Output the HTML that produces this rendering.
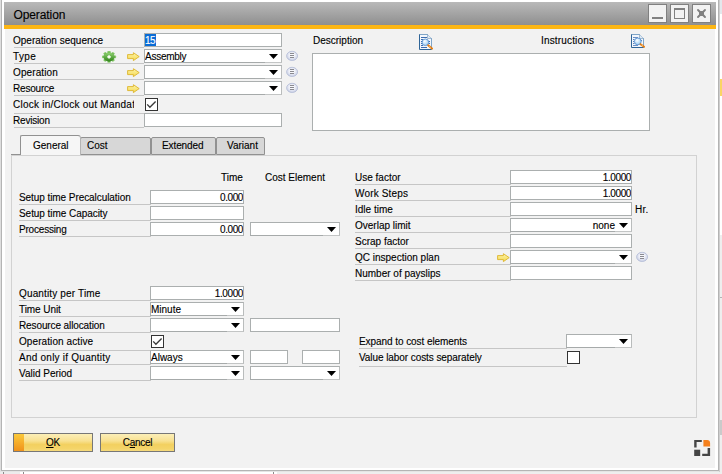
<!DOCTYPE html>
<html lang="en"><head><meta charset="utf-8"><title>Operation</title>
<style>
html,body{margin:0;padding:0;background:#fff;}
body{width:722px;height:474px;overflow:hidden;position:relative;font-family:"Liberation Sans",sans-serif;font-size:10px;color:#000;-webkit-text-stroke:0.12px;}
#w{position:absolute;left:0;top:0;width:722px;height:474px;overflow:hidden;background:#fff;}
#w div,#w svg,#w i,#w span{box-sizing:border-box;}
.o0{position:absolute;left:0;top:0;width:1px;height:471px;background:#dedede;}
.o1{position:absolute;left:1px;top:0;width:1px;height:471px;background:#b4b4b4;}
.o2{position:absolute;left:718px;top:0;width:1px;height:471px;background:#b4b4b4;}
.o3{position:absolute;left:1px;top:470px;width:718px;height:1px;background:#b4b4b4;}
.o4{position:absolute;left:0;top:471px;width:720px;height:1px;background:#e4e4e4;}
.o5{position:absolute;left:719px;top:0;width:1px;height:472px;background:#cfcfcf;}
.o6{position:absolute;left:720px;top:0;width:2px;height:14px;background:#e3e8ec;}
.frame{position:absolute;left:5px;top:2px;width:710px;height:466px;background:#f2f2f2;}
.title{position:absolute;left:4px;top:2px;width:712px;height:23px;background:linear-gradient(#b9b9b9,#8f8f8f);}
.tt{position:absolute;left:9.4px;top:5px;font-size:12px;line-height:16px;letter-spacing:-0.08px;white-space:nowrap;}
.stripe{position:absolute;left:4px;top:25px;width:712px;height:4px;background:#fcb614;}
.t{position:absolute;height:14px;line-height:14px;white-space:nowrap;}
.ul{position:absolute;height:1px;background:#c6c6c6;}
.in{position:absolute;background:#fff;border:1px solid #abafaf;line-height:12px;white-space:nowrap;overflow:hidden;}
.in .v{position:absolute;left:0;top:1px;height:12px;}
.in.r .v{left:auto;right:0;}
.in.r.hd .v{right:16px;}
.sel{background:#0a6cd6;color:#fff;display:inline-block;height:12px;margin:-1px 0 0 0;padding:1px 0 0 0;width:11px;letter-spacing:-0.6px;white-space:nowrap;}
.dd{position:absolute;right:3px;top:4px;width:9px;height:5px;background:#000;clip-path:polygon(0 0,100% 0,50% 100%);}
.in.hd{border-right-color:#b9bcbc;border-bottom-color:#c3c5c5;}
.db{position:absolute;height:1px;background:#a6aaaa;}
.a{position:absolute;}
.bg{position:absolute;}
.cb{position:absolute;width:13px;height:13px;border:1px solid #333;background:#fff;}
.cb svg{position:absolute;left:0;top:0;}
.panel{position:absolute;left:11px;top:155px;width:686px;height:263px;border:1px solid #d2d2d2;}
.tab{position:absolute;top:137px;height:18px;background:#d7d7d7;border:1px solid #919191;border-radius:2px 2px 0 0;line-height:16px;}
.tab span{position:absolute;top:0;white-space:nowrap;}
.tab.act{top:135px;height:20px;background:#f6f6f6;border-color:#919191 #b4b4b4 #919191 #919191;border-bottom:none;border-radius:2px 3px 0 0;line-height:20px;}
.pl{position:absolute;left:11px;top:154px;width:10px;height:1px;background:#919191;}
.btn{position:absolute;top:433px;height:19px;border:1px solid #777;background:linear-gradient(#fcefb8 0%,#f8e192 40%,#f3d060 62%,#f4d468 85%,#f6da7c 100%);text-align:center;line-height:17px;letter-spacing:-0.3px;}
.btn .def{position:absolute;left:0;top:0;width:10px;height:17px;background:linear-gradient(#fbc93a,#f0921c);}
.btn span{position:relative;}
</style></head>
<body><div id="w">
<svg class="a" width="0" height="0" style="left:0;top:0" aria-hidden="true"><defs>
<linearGradient id="ag" x1="0" y1="0" x2="0" y2="1"><stop offset="0" stop-color="#fdf5ae"/><stop offset="1" stop-color="#f5d84c"/></linearGradient>
<radialGradient id="cg" cx="0.5" cy="0.42" r="0.6"><stop offset="0.3" stop-color="#f7f8fc"/><stop offset="1" stop-color="#c3cae2"/></radialGradient>
<radialGradient id="lg" cx="0.4" cy="0.35" r="0.7"><stop offset="0" stop-color="#ffffff"/><stop offset="1" stop-color="#8fc8f4"/></radialGradient>
<linearGradient id="gg" x1="0" y1="0" x2="0" y2="1"><stop offset="0" stop-color="#93d674"/><stop offset="1" stop-color="#2f8219"/></linearGradient>
</defs></svg>
<div class="o0"></div><div class="o1"></div><div class="o2"></div><div class="o3"></div><div class="o4"></div><div class="o5"></div><div class="o6"></div>
<div class="bg" style="left:720px;top:79px;width:2px;height:17px;background:#fad564"></div>
<div class="bg" style="left:720px;top:235px;width:2px;height:239px;background:#eeeeee"></div>
<div class="bg" style="left:720px;top:297px;width:2px;height:1px;background:#b4b4b4"></div>
<div class="bg" style="left:720px;top:420px;width:2px;height:15px;background:#cacaca"></div>
<div class="bg" style="left:0;top:472px;width:20px;height:2px;background:#ececec"></div>
<div class="bg" style="left:3px;top:472px;width:1px;height:2px;background:#8a8a8a"></div>
<div class="bg" style="left:23px;top:472px;width:1px;height:2px;background:#8a8a8a"></div>
<div class="bg" style="left:273px;top:472px;width:1px;height:2px;background:#8a8a8a"></div>
<div class="bg" style="left:277px;top:472px;width:445px;height:2px;background:#eeeeee"></div>
<div class="frame"></div>
<div class="title"><span class="tt">Operation</span></div>
<div class="stripe"></div>
<svg class="a" style="left:648px;top:4px" width="19" height="19" viewBox="0 0 19 19"><rect x="0.5" y="0.5" width="18" height="18" fill="#f2f2f2" stroke="#808080"/><path d="M4 14H15" stroke="#808080" stroke-width="2"/></svg>
<svg class="a" style="left:670px;top:4px" width="19" height="19" viewBox="0 0 19 19"><rect x="0.5" y="0.5" width="18" height="18" fill="#f2f2f2" stroke="#808080"/><rect x="4.5" y="4.5" width="10" height="10" fill="none" stroke="#808080" stroke-width="1"/><path d="M4 5H15" stroke="#808080" stroke-width="2"/></svg>
<svg class="a" style="left:692px;top:4px" width="19" height="19" viewBox="0 0 19 19"><rect x="0.5" y="0.5" width="18" height="18" fill="#f2f2f2" stroke="#808080"/><path d="M6 6L13 13M13 6L6 13" stroke="#808080" stroke-width="1.9" stroke-linecap="round"/><rect x="7" y="7" width="5" height="5" fill="#808080"/></svg>
<div class="t " style="left:13px;top:34px;letter-spacing:0px;">Operation sequence</div>
<div class="ul" style="left:14px;top:47px;width:130px"></div>
<div class="in" style="left:144px;top:33px;width:138px;height:14px;letter-spacing:0px"><span class="v"><span class="sel">15</span></span></div>
<div class="t " style="left:13px;top:50px;letter-spacing:0.4px;">Type</div>
<div class="ul" style="left:14px;top:63px;width:130px"></div>
<div class="in hd" style="left:144px;top:49px;width:138px;height:14px;letter-spacing:-0.25px"><span class="v">Assembly</span><i class="dd"></i></div><div class="db" style="left:144px;top:62px;width:121px"></div>
<div class="t " style="left:13px;top:66px;letter-spacing:0.1px;">Operation</div>
<div class="ul" style="left:14px;top:79px;width:130px"></div>
<div class="in hd" style="left:144px;top:65px;width:138px;height:14px;letter-spacing:0px"><i class="dd"></i></div><div class="db" style="left:144px;top:78px;width:121px"></div>
<div class="t " style="left:13px;top:82px;letter-spacing:-0.2px;">Resource</div>
<div class="ul" style="left:14px;top:95px;width:130px"></div>
<div class="in hd" style="left:144px;top:81px;width:138px;height:14px;letter-spacing:0px"><i class="dd"></i></div><div class="db" style="left:144px;top:94px;width:121px"></div>
<div class="t " style="left:13px;top:98px;width:121px;letter-spacing:0.24px;overflow:hidden;">Clock in/Clock out Mandat</div>
<div class="ul" style="left:14px;top:113px;width:130px"></div>
<div class="cb" style="left:145px;top:98px"><svg width="11" height="11" viewBox="0 0 11 11"><path d="M1.2 5.4 L3.9 8.2 L9.6 2.5" fill="none" stroke="#3a3a3a" stroke-width="1.35"/></svg></div>
<div class="t " style="left:13px;top:114px;letter-spacing:-0.2px;">Revision</div>
<div class="ul" style="left:14px;top:127px;width:130px"></div>
<div class="in" style="left:144px;top:113px;width:138px;height:14px;letter-spacing:0px"></div>
<svg class="a" style="left:102px;top:50px" width="15" height="14" viewBox="0 0 15 14">
<g transform="translate(7.05 6.9) scale(1.07 0.9)" fill="url(#gg)"><g fill="url(#gg)" opacity="0.92"><rect x="-1.5" y="-6.6" width="3" height="3" rx="0.7" transform="rotate(0)"/><rect x="-1.5" y="-6.6" width="3" height="3" rx="0.7" transform="rotate(45)"/><rect x="-1.5" y="-6.6" width="3" height="3" rx="0.7" transform="rotate(90)"/><rect x="-1.5" y="-6.6" width="3" height="3" rx="0.7" transform="rotate(135)"/><rect x="-1.5" y="-6.6" width="3" height="3" rx="0.7" transform="rotate(180)"/><rect x="-1.5" y="-6.6" width="3" height="3" rx="0.7" transform="rotate(225)"/><rect x="-1.5" y="-6.6" width="3" height="3" rx="0.7" transform="rotate(270)"/><rect x="-1.5" y="-6.6" width="3" height="3" rx="0.7" transform="rotate(315)"/></g><circle r="5" fill="url(#gg)"/><path d="M0 -1.8 L1.7 0 L0 1.8 L-1.7 0Z" fill="#fbfdf8" stroke="#fbfdf8" stroke-width="0.6" stroke-linejoin="round"/></g></svg>
<svg class="a" style="left:127px;top:52px" width="13" height="10" viewBox="0 0 13 10"><path d="M0.6 2.6 H6.4 V0.7 L12.2 4.6 L6.4 8.6 V6.6 H0.6 Z" fill="url(#ag)" stroke="#dcb42a" stroke-width="0.9" stroke-linejoin="round"/></svg>
<svg class="a" style="left:286px;top:50px" width="13" height="12" viewBox="0 0 13 12"><ellipse cx="6.1" cy="5.9" rx="5.5" ry="4.6" fill="url(#cg)" stroke="#b3bbd6" stroke-width="0.8"/><path d="M4 3.5H8M4 5.5H8M4 7.5H8" stroke="#8a8a90" stroke-width="1"/></svg>
<svg class="a" style="left:127px;top:68px" width="13" height="10" viewBox="0 0 13 10"><path d="M0.6 2.6 H6.4 V0.7 L12.2 4.6 L6.4 8.6 V6.6 H0.6 Z" fill="url(#ag)" stroke="#dcb42a" stroke-width="0.9" stroke-linejoin="round"/></svg>
<svg class="a" style="left:286px;top:66px" width="13" height="12" viewBox="0 0 13 12"><ellipse cx="6.1" cy="5.9" rx="5.5" ry="4.6" fill="url(#cg)" stroke="#b3bbd6" stroke-width="0.8"/><path d="M4 3.5H8M4 5.5H8M4 7.5H8" stroke="#8a8a90" stroke-width="1"/></svg>
<svg class="a" style="left:127px;top:84px" width="13" height="10" viewBox="0 0 13 10"><path d="M0.6 2.6 H6.4 V0.7 L12.2 4.6 L6.4 8.6 V6.6 H0.6 Z" fill="url(#ag)" stroke="#dcb42a" stroke-width="0.9" stroke-linejoin="round"/></svg>
<svg class="a" style="left:286px;top:82px" width="13" height="12" viewBox="0 0 13 12"><ellipse cx="6.1" cy="5.9" rx="5.5" ry="4.6" fill="url(#cg)" stroke="#b3bbd6" stroke-width="0.8"/><path d="M4 3.5H8M4 5.5H8M4 7.5H8" stroke="#8a8a90" stroke-width="1"/></svg>
<div class="t " style="left:313px;top:34px;letter-spacing:0px;">Description</div>
<svg class="a" style="left:418px;top:33px" width="16" height="18" viewBox="0 0 16 18">
<path d="M1.5 1.5 H9.5 L13.5 5.5 V16.5 H1.5 Z" fill="#f3f7fc" stroke="#2f6598" stroke-width="1"/>
<path d="M2 1.5 H9.5 L13.5 5.5 V15.5" fill="none" stroke="#7fa5c8" stroke-width="1"/>
<path d="M9.5 1.5 V5.5 H13.5" fill="#dfe9f3" stroke="#8fabc6" stroke-width="0.8"/>
<path d="M3 4.5H9M3 14.5H9" stroke="#3b6cb0" stroke-width="1"/><path d="M3 6.5H5M3 8.5H4.5M3 10.5H4.5M3 12.5H5M10.5 8.5H12M10.5 10.5H12" stroke="#3b6cb0" stroke-width="1"/>
<circle cx="7.4" cy="9.3" r="3.3" fill="url(#lg)" stroke="#5d93cf" stroke-width="0.9"/><path d="M10.2 12.3 L14 15.6" stroke="#e27c12" stroke-width="2" stroke-linecap="round"/><path d="M11.3 13.2 L12.6 14.4" stroke="#fbd9a0" stroke-width="0.9"/>
</svg>
<div class="t " style="left:541px;top:34px;letter-spacing:0.16px;">Instructions</div>
<svg class="a" style="left:630px;top:33px" width="16" height="18" viewBox="0 0 16 18">
<path d="M1.5 1.5 H9.5 L13.5 5.5 V14.5 H1.5 Z" fill="#f3f7fc" stroke="#2f6598" stroke-width="1"/>
<path d="M2 1.5 H9.5 L13.5 5.5 V13.5" fill="none" stroke="#7fa5c8" stroke-width="1"/>
<path d="M9.5 1.5 V5.5 H13.5" fill="#dfe9f3" stroke="#8fabc6" stroke-width="0.8"/>
<path d="M3 4.5H8M3 12.5H8" stroke="#6a8fc6" stroke-width="1"/><path d="M3 6.5H4.5M3 8.5H4M3 10.5H4.5M11 7.5H12" stroke="#5b82be" stroke-width="1"/>
<circle cx="7.8" cy="8.4" r="3.4" fill="url(#lg)" stroke="#5d93cf" stroke-width="0.9"/><path d="M10.6 11.2 L14 13.8" stroke="#e27c12" stroke-width="2" stroke-linecap="round"/><path d="M11.6 12 L12.8 12.9" stroke="#fbd9a0" stroke-width="0.9"/>
</svg>
<div class="in" style="left:312px;top:53px;width:338px;height:78px"></div>
<div class="panel"></div><div class="pl"></div>
<div class="tab" style="left:80px;width:71px"><span style="left:6px">Cost</span></div>
<div class="tab" style="left:151px;width:65px"><span style="left:10px;letter-spacing:-0.1px">Extended</span></div>
<div class="tab" style="left:216px;width:49px"><span style="left:10px">Variant</span></div>
<div class="tab act" style="left:20px;width:61px"><span style="left:12px">General</span></div>
<div class="t " style="left:221px;top:171px;letter-spacing:0px;">Time</div>
<div class="t " style="left:265px;top:171px;letter-spacing:0px;">Cost Element</div>
<div class="t " style="left:19px;top:191px;letter-spacing:-0.07px;">Setup time Precalculation</div>
<div class="ul" style="left:19px;top:204px;width:132px"></div>
<div class="in r" style="left:150px;top:190px;width:94px;height:14px;letter-spacing:-0.4px"><span class="v">0.000</span></div>
<div class="t " style="left:19px;top:207px;letter-spacing:-0.05px;">Setup time Capacity</div>
<div class="ul" style="left:19px;top:220px;width:132px"></div>
<div class="in" style="left:150px;top:206px;width:94px;height:14px;letter-spacing:0px"></div>
<div class="t " style="left:19px;top:223px;letter-spacing:-0.19px;">Processing</div>
<div class="ul" style="left:19px;top:236px;width:132px"></div>
<div class="in r" style="left:150px;top:222px;width:94px;height:14px;letter-spacing:-0.4px"><span class="v">0.000</span></div>
<div class="in hd" style="left:250px;top:222px;width:90px;height:14px;letter-spacing:0px"><i class="dd"></i></div><div class="db" style="left:250px;top:235px;width:73px"></div>
<div class="t " style="left:19px;top:287px;letter-spacing:0.15px;">Quantity per Time</div>
<div class="ul" style="left:19px;top:300px;width:132px"></div>
<div class="in r" style="left:150px;top:286px;width:94px;height:14px;letter-spacing:-0.4px"><span class="v">1.0000</span></div>
<div class="t " style="left:19px;top:303px;letter-spacing:-0.07px;">Time Unit</div>
<div class="ul" style="left:19px;top:316px;width:132px"></div>
<div class="in hd" style="left:150px;top:302px;width:94px;height:14px;letter-spacing:0px"><span class="v">Minute</span><i class="dd"></i></div><div class="db" style="left:150px;top:315px;width:77px"></div>
<div class="t " style="left:19px;top:319px;letter-spacing:-0.11px;">Resource allocation</div>
<div class="ul" style="left:19px;top:332px;width:132px"></div>
<div class="in hd" style="left:150px;top:318px;width:94px;height:14px;letter-spacing:0px"><i class="dd"></i></div><div class="db" style="left:150px;top:331px;width:77px"></div>
<div class="in" style="left:250px;top:318px;width:90px;height:14px;letter-spacing:0px"></div>
<div class="t " style="left:19px;top:335px;letter-spacing:0.09px;">Operation active</div>
<div class="ul" style="left:19px;top:350px;width:132px"></div>
<div class="cb" style="left:151px;top:335px"><svg width="11" height="11" viewBox="0 0 11 11"><path d="M1.2 5.4 L3.9 8.2 L9.6 2.5" fill="none" stroke="#3a3a3a" stroke-width="1.35"/></svg></div>
<div class="t " style="left:19px;top:351px;letter-spacing:0.24px;">And only if Quantity</div>
<div class="ul" style="left:19px;top:364px;width:132px"></div>
<div class="in hd" style="left:150px;top:350px;width:94px;height:14px;letter-spacing:0px"><span class="v">Always</span><i class="dd"></i></div><div class="db" style="left:150px;top:363px;width:77px"></div>
<div class="in" style="left:250px;top:350px;width:38px;height:14px;letter-spacing:0px"></div>
<div class="in" style="left:302px;top:350px;width:38px;height:14px;letter-spacing:0px"></div>
<div class="t " style="left:19px;top:367px;letter-spacing:0px;">Valid Period</div>
<div class="ul" style="left:19px;top:380px;width:132px"></div>
<div class="in hd" style="left:150px;top:366px;width:94px;height:14px;letter-spacing:0px"><i class="dd"></i></div><div class="db" style="left:150px;top:379px;width:77px"></div>
<div class="in hd" style="left:250px;top:366px;width:90px;height:14px;letter-spacing:0px"><i class="dd"></i></div><div class="db" style="left:250px;top:379px;width:73px"></div>
<div class="t " style="left:355px;top:171px;letter-spacing:0px;">Use factor</div>
<div class="ul" style="left:355px;top:184px;width:156px"></div>
<div class="in r" style="left:510px;top:170px;width:122px;height:14px;letter-spacing:-0.4px"><span class="v">1.0000</span></div>
<div class="t " style="left:355px;top:187px;letter-spacing:0.17px;">Work Steps</div>
<div class="ul" style="left:355px;top:200px;width:156px"></div>
<div class="in r" style="left:510px;top:186px;width:122px;height:14px;letter-spacing:-0.4px"><span class="v">1.0000</span></div>
<div class="t " style="left:355px;top:203px;letter-spacing:0px;">Idle time</div>
<div class="ul" style="left:355px;top:216px;width:156px"></div>
<div class="in" style="left:510px;top:202px;width:122px;height:14px;letter-spacing:0px"></div>
<div class="t " style="left:635px;top:203px;letter-spacing:0.3px;">Hr.</div>
<div class="t " style="left:355px;top:219px;letter-spacing:0px;">Overlap limit</div>
<div class="ul" style="left:355px;top:232px;width:156px"></div>
<div class="in r hd" style="left:510px;top:218px;width:122px;height:14px;letter-spacing:0px"><span class="v">none</span><i class="dd"></i></div><div class="db" style="left:510px;top:231px;width:105px"></div>
<div class="t " style="left:355px;top:235px;letter-spacing:0px;">Scrap factor</div>
<div class="ul" style="left:355px;top:248px;width:156px"></div>
<div class="in" style="left:510px;top:234px;width:122px;height:14px;letter-spacing:0px"></div>
<div class="t " style="left:355px;top:251px;letter-spacing:0px;">QC inspection plan</div>
<div class="ul" style="left:355px;top:264px;width:156px"></div>
<div class="in hd" style="left:510px;top:250px;width:122px;height:14px;letter-spacing:0px"><i class="dd"></i></div><div class="db" style="left:510px;top:263px;width:105px"></div>
<svg class="a" style="left:497px;top:253px" width="13" height="10" viewBox="0 0 13 10"><path d="M0.6 2.6 H6.4 V0.7 L12.2 4.6 L6.4 8.6 V6.6 H0.6 Z" fill="url(#ag)" stroke="#dcb42a" stroke-width="0.9" stroke-linejoin="round"/></svg>
<svg class="a" style="left:636px;top:251px" width="13" height="12" viewBox="0 0 13 12"><ellipse cx="6.1" cy="5.9" rx="5.5" ry="4.6" fill="url(#cg)" stroke="#b3bbd6" stroke-width="0.8"/><path d="M4 3.5H8M4 5.5H8M4 7.5H8" stroke="#8a8a90" stroke-width="1"/></svg>
<div class="t " style="left:355px;top:267px;letter-spacing:0px;">Number of payslips</div>
<div class="ul" style="left:355px;top:280px;width:156px"></div>
<div class="in" style="left:510px;top:266px;width:122px;height:14px;letter-spacing:0px"></div>
<div class="t " style="left:359px;top:335px;letter-spacing:-0.065px;">Expand to cost elements</div>
<div class="ul" style="left:359px;top:348px;width:208px"></div>
<div class="in hd" style="left:566px;top:334px;width:66px;height:14px;letter-spacing:0px"><i class="dd"></i></div><div class="db" style="left:566px;top:347px;width:49px"></div>
<div class="t " style="left:359px;top:351px;letter-spacing:-0.075px;">Value labor costs separately</div>
<div class="ul" style="left:359px;top:366px;width:208px"></div>
<div class="cb" style="left:567px;top:351px"></div>
<div class="btn" style="left:13px;width:80px"><i class="def"></i><span><u>O</u>K</span></div>
<div class="btn" style="left:100px;width:75px"><span>C<u>a</u>ncel</span></div>
<svg class="a" style="left:694px;top:440px" width="17" height="17" viewBox="0 0 17 17">
<path d="M0.2 0H7.8V2.1H2.6V7.6H0.2Z" fill="#454545"/>
<path d="M9.4 0H13.2Q16.1 0 16.1 3V6.5H9.4Z" fill="#f5801c"/>
<rect x="0.2" y="9.7" width="6" height="6.3" fill="#454545"/>
<path d="M16.1 8.1V16H8.2V13.8H13.6V8.1Z" fill="#454545"/>
</svg>
</div></body></html>
